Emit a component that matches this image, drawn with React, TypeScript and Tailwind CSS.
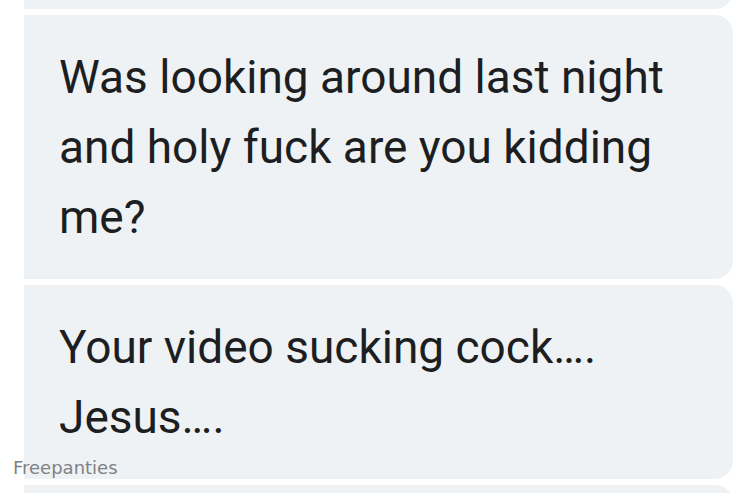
import React from "react";

const messages = [
  "Was looking around last night and holy fuck are you kidding me?",
  "Your video sucking cock…. Jesus….",
];

function Bubble({ children, className = "" }: { children?: React.ReactNode; className?: string }) {
  return (
    <div
      className={`ml-[24px] w-[709px] rounded-r-[18px] bg-[#eff2f5] pl-[35px] pr-[40px] text-[#1c1e21] ${className}`}
    >
      {children}
    </div>
  );
}

export default function App() {
  return (
    <div className="relative h-[493px] w-[745px] overflow-hidden bg-white font-['Roboto',sans-serif]">
      <div className="-mt-[60px] flex flex-col gap-[6px]">
        <Bubble className="h-[69px]" />
        {messages.map((m) => (
          <Bubble key={m} className="py-[27px] text-[46px] leading-[70px]">
            {m}
          </Bubble>
        ))}
        <Bubble className="h-[40px]" />
      </div>
      <span className="absolute left-[13px] top-[454px] font-['DejaVu_Sans',sans-serif] text-[18px] text-[#7e8185]">
        Freepanties
      </span>
    </div>
  );
}
